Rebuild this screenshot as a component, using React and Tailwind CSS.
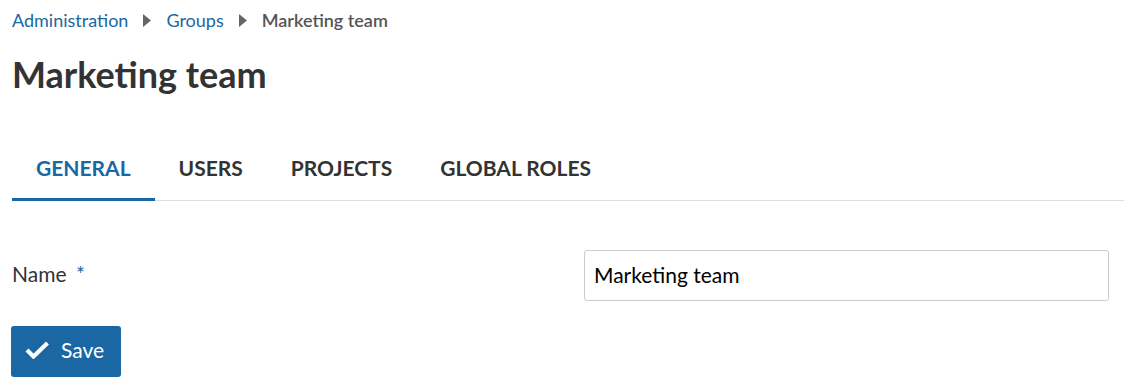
import React, { useState } from 'react';

const tabs = ['General', 'Users', 'Projects', 'Global roles'];

function Caret() {
  return (
    <svg width="8" height="13" viewBox="0 0 8 13" className="mx-[15px]">
      <path d="M0 0 L8 6.5 L0 13 Z" fill="#666" />
    </svg>
  );
}

export default function App() {
  const [active, setActive] = useState('General');
  const [name, setName] = useState('Marketing team');

  return (
    <div className="min-h-[389px] bg-white text-[#333] pl-3 pr-[15px]" style={{ fontFamily: 'Lato, "Noto Sans", sans-serif' }}>
      <nav className="flex items-center h-[40px] text-[18px]">
        <a href="#" className="text-[#1a67a3]">Administration</a>
        <Caret />
        <a href="#" className="text-[#1a67a3]">Groups</a>
        <Caret />
        <span className="text-[#555] font-semibold">Marketing team</span>
      </nav>

      <h1 className="text-[36px] font-bold leading-[40px] mt-[14px] text-[#333]">Marketing team</h1>

      <div className="flex border-b border-[#ddd] mt-[44px] mr-[-15px]">
        {tabs.map(t => (
          <button
            key={t}
            onClick={() => setActive(t)}
            className={
              'px-6 h-[63px] text-[21px] font-bold uppercase border-b-[3px] mb-[-1px] ' +
              (active === t ? 'text-[#1a67a3] border-[#1a67a3]' : 'text-[#333] border-transparent')
            }
          >
            {t}
          </button>
        ))}
      </div>

      <div className="flex items-center mt-[49px]">
        <label className="w-[572px] text-[21px] pb-[3px]">
          Name <span className="text-[#1a67a3] ml-1">*</span>
        </label>
        <input
          value={name}
          onChange={e => setName(e.target.value)}
          className="flex-1 h-[51px] border border-[#ccc] rounded-[3px] pl-[9px] pr-[9px] pb-[3px] text-[21px] text-black outline-none"
        />
      </div>

      <button className="mt-[25px] -ml-px flex items-center h-[51px] pl-[14px] pr-[17px] pb-[3px] bg-[#1a67a3] text-white text-[21px] rounded-[3px]">
        <svg width="24" height="18" viewBox="0 0 24 18" className="mr-[12px]">
          <path d="M2 9 L8.5 15.5 L22.5 2" stroke="white" strokeWidth="4.2" fill="none" strokeLinejoin="miter" />
        </svg>
        Save
      </button>
    </div>
  );
}
